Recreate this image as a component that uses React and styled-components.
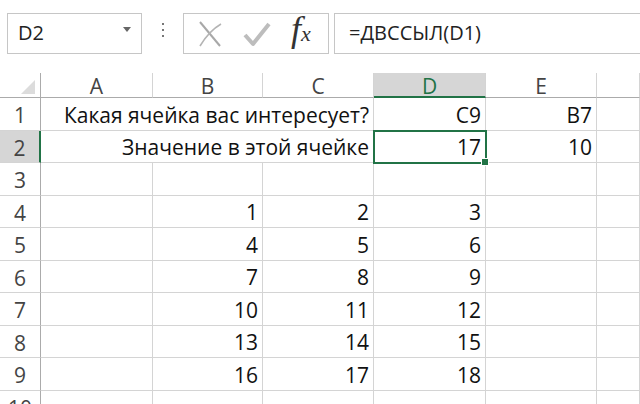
import styled, { createGlobalStyle } from "styled-components";

const Global = createGlobalStyle`
    html, body {
        margin: 0;
        padding: 0;
        background: #ffffff;
        overflow: hidden;
    }
    body {
        font-family: "Open Sans", "Noto Sans", sans-serif;
        color: #222;
    }
`;

const COLS = ["A", "B", "C", "D", "E", ""];

const ROWS = [
    { n: 1, span: "Какая ячейка вас интересует?", d: "C9", e: "B7" },
    { n: 2, span: "Значение в этой ячейке", d: "17", e: "10", active: true },
    { n: 3 },
    { n: 4, b: "1", c: "2", d: "3" },
    { n: 5, b: "4", c: "5", d: "6" },
    { n: 6, b: "7", c: "8", d: "9" },
    { n: 7, b: "10", c: "11", d: "12" },
    { n: 8, b: "13", c: "14", d: "15" },
    { n: 9, b: "16", c: "17", d: "18" },
    { n: 10 },
];

const App = () => {
    return (
        <Page>
            <Global />
            <Toolbar>
                <NameBox>
                    <span>D2</span>
                    <Caret />
                </NameBox>
                <Dots>
                    <i /><i /><i />
                </Dots>
                <Buttons>
                    <svg width="26" height="30" viewBox="0 0 26 30">
                        <path d="M3 3 L23 27" stroke="#a8a8a8" strokeWidth="2" fill="none" />
                        <path d="M24 5 Q12 12 3 27" stroke="#b4b4b4" strokeWidth="1.6" fill="none" />
                    </svg>
                    <svg width="28" height="26" viewBox="0 0 28 26">
                        <path d="M2 14 L10 23 L26 3" stroke="#bdbdbd" strokeWidth="4" fill="none" strokeLinejoin="round" />
                    </svg>
                    <Fx>f<sub>x</sub></Fx>
                </Buttons>
                <Formula>=ДВССЫЛ(D1)</Formula>
            </Toolbar>

            <Sheet>
                <Corner><Triangle /></Corner>
                {COLS.map((c, i) => (
                    <ColHead key={i} $active={c === "D"}>{c}</ColHead>
                ))}
                {ROWS.map((r) => (
                    <Row key={r.n} r={r} />
                ))}
            </Sheet>
        </Page>
    );
};

const Row = ({ r }) => (
    <>
        <RowHead $active={r.active}>{r.n}</RowHead>
        {r.span ? (
            <Cell $span={3}>{r.span}</Cell>
        ) : (
            <>
                <Cell />
                <Cell>{r.b}</Cell>
                <Cell>{r.c}</Cell>
            </>
        )}
        <Cell $selected={r.active}>
            {r.d}
            {r.active && <Handle />}
        </Cell>
        <Cell>{r.e}</Cell>
        <Cell />
    </>
);

export default App;

const Page = styled.div`
    width: 640px;
    height: 404px;
    overflow: hidden;
`;

const Toolbar = styled.div`
    height: 73px;
    display: flex;
    align-items: flex-start;
    padding: 13px 0 0 7px;
    box-sizing: border-box;
`;

const NameBox = styled.div`
    width: 135px;
    height: 41px;
    box-sizing: border-box;
    border: 1px solid #c6c6c6;
    display: flex;
    align-items: center;
    justify-content: space-between;
    padding: 0 10px 2px 10px;
    font-size: 20px;
    color: #222;
`;

const Caret = styled.div`
    width: 0;
    height: 0;
    border-left: 4px solid transparent;
    border-right: 4px solid transparent;
    border-top: 5px solid #666;
    margin-bottom: 6px;
`;

const Dots = styled.div`
    width: 41px;
    display: flex;
    flex-direction: column;
    align-items: center;
    gap: 4px;
    padding-top: 10px;

    i {
        width: 2px;
        height: 2px;
        background: #777;
    }
`;

const Buttons = styled.div`
    width: 146px;
    height: 41px;
    box-sizing: border-box;
    border: 1px solid #c6c6c6;
    display: flex;
    align-items: center;
    gap: 20px;
    padding: 0 0 0 13px;
`;

const Fx = styled.span`
    font-family: "Liberation Serif", serif;
    font-style: italic;
    font-size: 36px;
    line-height: 36px;
    color: #333;
    padding-bottom: 4px;

    sub {
        font-size: 22px;
        vertical-align: 0;
        margin-left: 0;
    }
`;

const Formula = styled.div`
    flex: 1;
    height: 41px;
    margin-left: 5px;
    box-sizing: border-box;
    border: 1px solid #c6c6c6;
    border-right: none;
    display: flex;
    align-items: center;
    padding: 0 0 2px 14px;
    font-size: 20px;
    color: #222;
`;

const Sheet = styled.div`
    display: grid;
    grid-template-columns: 41px 112px 110px 111px 112px 111px 1fr;
    grid-template-rows: 25px;
    grid-auto-rows: 32.5px;
    font-size: 21px;
`;

const Corner = styled.div`
    position: relative;
    border-right: 1px solid #ababab;
    border-bottom: 1px solid #ababab;
`;

const Triangle = styled.div`
    position: absolute;
    right: 5px;
    bottom: 3px;
    width: 0;
    height: 0;
    border-left: 14px solid transparent;
    border-bottom: 14px solid #dcdcdc;
`;

const ColHead = styled.div`
    display: flex;
    align-items: center;
    justify-content: center;
    border-right: 1px solid #d4d4d4;
    border-bottom: ${(p) => (p.$active ? "2px solid #217346" : "1px solid #ababab")};
    background: ${(p) => (p.$active ? "#d6d6d6" : "#ffffff")};
    color: ${(p) => (p.$active ? "#217346" : "#444")};
    padding-top: 2px;
`;

const RowHead = styled.div`
    display: flex;
    align-items: center;
    justify-content: center;
    border-bottom: 1px solid #d4d4d4;
    border-right: ${(p) => (p.$active ? "2px solid #217346" : "1px solid #ababab")};
    background: ${(p) => (p.$active ? "#d6d6d6" : "#ffffff")};
    color: #444;
    padding-top: 3px;
`;

const Cell = styled.div`
    position: relative;
    grid-column: span ${(p) => p.$span || 1};
    display: flex;
    align-items: flex-end;
    justify-content: flex-end;
    padding: 0 4px 1px 0;
    border-right: 1px solid #d4d4d4;
    border-bottom: 1px solid #d4d4d4;
    white-space: nowrap;
    color: #111;
    line-height: 28px;
    outline: ${(p) => (p.$selected ? "2px solid #217346" : "none")};
    outline-offset: -1px;
    z-index: ${(p) => (p.$selected ? 1 : 0)};
`;

const Handle = styled.div`
    position: absolute;
    right: -4px;
    bottom: -4px;
    width: 6px;
    height: 6px;
    background: #217346;
    border: 1px solid #fff;
`;
